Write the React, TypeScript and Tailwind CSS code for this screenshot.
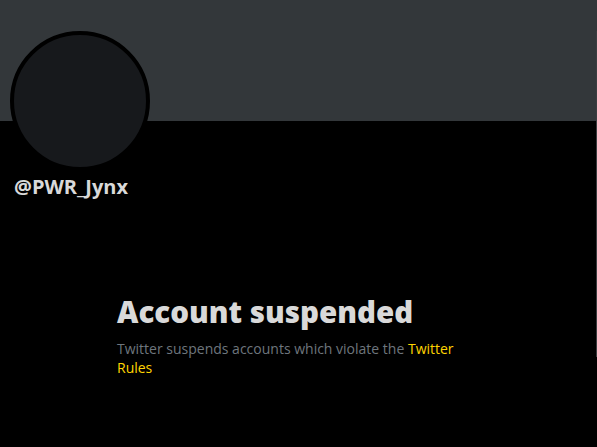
import React from 'react'

export default function App() {
  return (
    <div className="relative h-[447px] w-[597px] overflow-hidden bg-black font-['Open_Sans','Noto_Sans',sans-serif]">
      <div className="h-[121px] w-full bg-[#33373a]" />
      <div className="h-[326px] border-r border-[#3a3d40]">
        <div className="ml-[10px] -mt-[90px] h-[140px] w-[140px] rounded-full border-4 border-black bg-[#17191c]" />
        <div className="ml-[14px] mt-[4px] text-[20px] font-bold leading-[24px] text-[#d9d9d9]">@PWR_Jynx</div>
        <div className="ml-[117px] mt-[96px] w-[345px]">
          <h1 className="text-[29.5px] font-extrabold leading-[34px] text-[#d9d9d9]">Account suspended</h1>
          <p className="mt-[10px] text-[14px] leading-[19px] text-[#6e767d]">
            Twitter suspends accounts which violate the <span className="text-[#ffd400]">Twitter</span>{' '}
            <span className="text-[#ffd400]">Rules</span>
          </p>
        </div>
      </div>
    </div>
  )
}
